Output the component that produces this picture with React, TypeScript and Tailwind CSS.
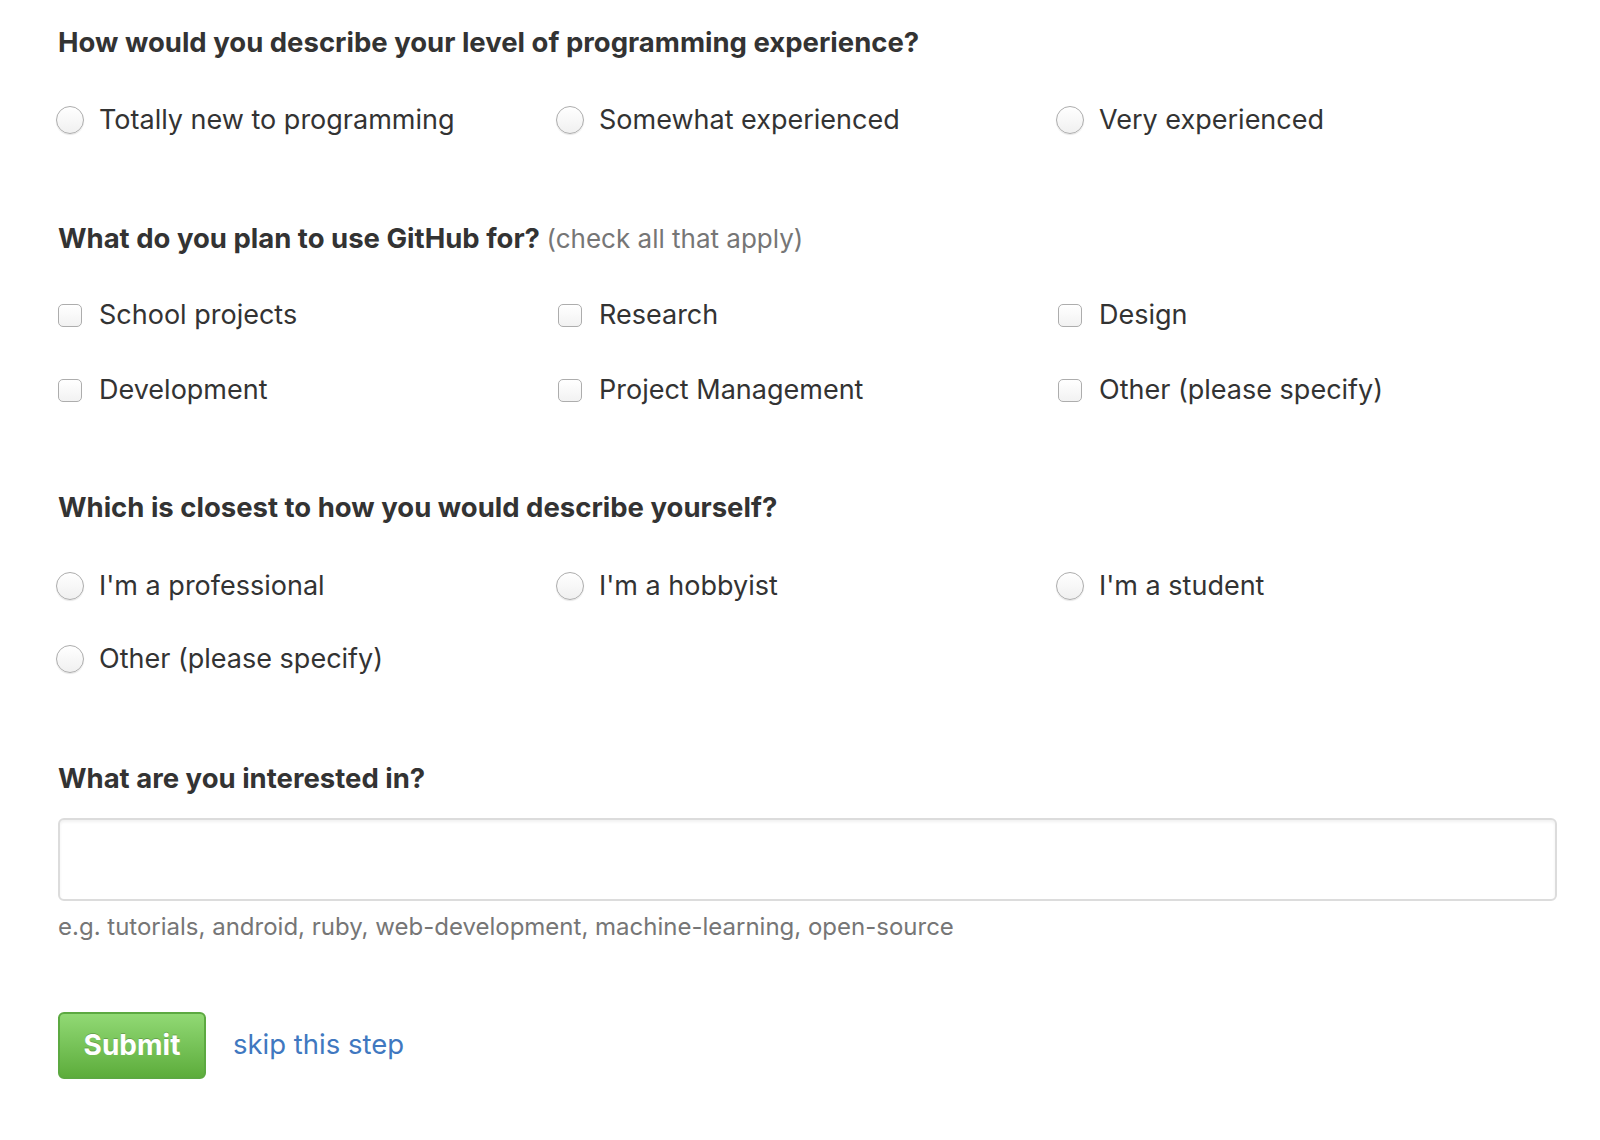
import React from 'react';

const font = { fontFamily: 'Inter, "Liberation Sans", sans-serif' };

function Radio({ label }: { label: string }) {
  return (
    <label className="flex h-9 items-center text-[27px] text-[#333333]">
      <span className="-ml-[2px] mr-[15px] flex w-[28px] justify-center">
        <span className="h-[28px] w-[28px] rounded-full border-[1.5px] border-[#adadad] bg-gradient-to-b from-white to-[#f0f0f0] shadow-[0_1px_1px_rgba(0,0,0,0.1)]" />
      </span>
      {label}
    </label>
  );
}

function Checkbox({ label }: { label: string }) {
  return (
    <label className="flex h-9 items-center text-[27px] text-[#333333]">
      <span className="-ml-[2px] mr-[15px] flex w-[28px] justify-center">
        <span className="h-[23px] w-[24px] rounded-[5px] border-[1.5px] border-[#adadad] bg-gradient-to-b from-white to-[#f2f2f2]" />
      </span>
      {label}
    </label>
  );
}

function Heading({ children, className = '' }: { children: React.ReactNode; className?: string }) {
  return <h2 className={`h-8 text-[27.5px] font-bold leading-8 text-[#333333] ${className}`}>{children}</h2>;
}

export default function App() {
  return (
    <div className="min-h-[1140px] bg-white pl-[58px] pr-[43px] pt-[26px]" style={font}>
      <Heading>How would you describe your level of programming experience?</Heading>
      <div className="mt-[44px] grid grid-cols-[500px_500px_500px]">
        <Radio label="Totally new to programming" />
        <Radio label="Somewhat experienced" />
        <Radio label="Very experienced" />
      </div>

      <Heading className="mt-[84px]">
        What do you plan to use GitHub for?{' '}
        <span className="text-[26px] font-normal text-[#767676]">(check all that apply)</span>
      </Heading>
      <div className="mt-[43px] grid grid-cols-[500px_500px_500px] gap-y-[39px]">
        <Checkbox label="School projects" />
        <Checkbox label="Research" />
        <Checkbox label="Design" />
        <Checkbox label="Development" />
        <Checkbox label="Project Management" />
        <Checkbox label="Other (please specify)" />
      </div>

      <Heading className="mt-[83px]">Which is closest to how you would describe yourself?</Heading>
      <div className="mt-[45px] grid grid-cols-[500px_500px_500px] gap-y-[37px]">
        <Radio label="I'm a professional" />
        <Radio label="I'm a hobbyist" />
        <Radio label="I'm a student" />
        <Radio label="Other (please specify)" />
      </div>

      <Heading className="mt-[85px]">What are you interested in?</Heading>
      <input
        type="text"
        className="mt-6 block h-[83px] w-[1499px] rounded-[6px] border-2 border-[#dcdcdc] bg-white px-4 text-[28px] shadow-[inset_0_2px_3px_rgba(0,0,0,0.06)] outline-none"
      />
      <p className="mt-[10px] h-8 text-[24px] leading-8 text-[#767676]">
        e.g. tutorials, android, ruby, web-development, machine-learning, open-source
      </p>

      <div className="mt-[69px] flex items-center">
        <button className="h-[67px] w-[148px] rounded-[6px] border-2 border-[#5ca941] bg-gradient-to-b from-[#91d974] to-[#5dad3b] pb-[2px] text-[28px] font-bold text-white [text-shadow:0_-1px_0_rgba(0,0,0,0.2)]">
          Submit
        </button>
        <a href="#" className="ml-[27px] pb-[2px] text-[27.5px] text-[#4078c0]">
          skip this step
        </a>
      </div>
    </div>
  );
}
